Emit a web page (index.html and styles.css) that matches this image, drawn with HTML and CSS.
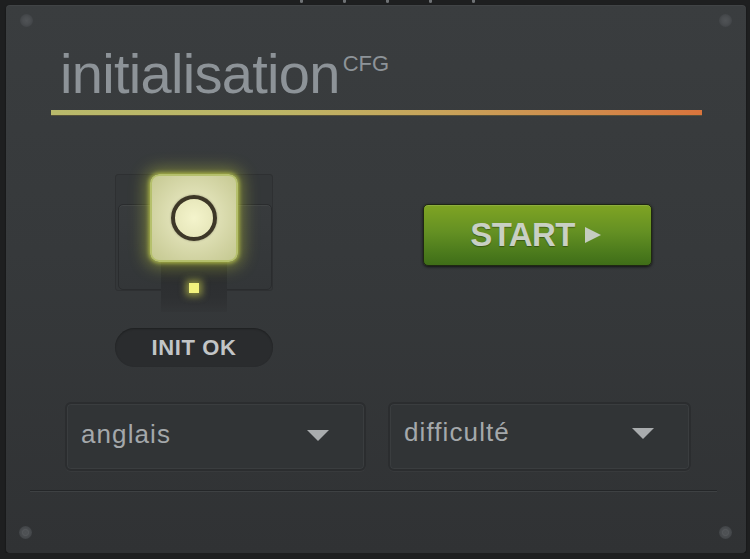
FILE: index.html
```html
<!DOCTYPE html>
<html lang="fr">
<head>
<meta charset="utf-8">
<title>initialisation CFG</title>
<link rel="stylesheet" href="styles.css">
</head>
<body>
<div class="ticks">
  <span class="tick"></span><span class="tick"></span><span class="tick"></span><span class="tick"></span><span class="tick"></span>
</div>
<main class="panel">
  <span class="screw screw-tl"></span>
  <span class="screw screw-tr"></span>
  <span class="screw screw-bl"></span>
  <span class="screw screw-br"></span>

  <h1 class="title">initialisation<sup class="title-sup">CFG</sup></h1>
  <div class="accent-bar"></div>

  <section class="controls">
    <div class="init-col">
      <div class="init-widget">
        <div class="init-frame"><div class="init-inner"></div></div>
        <button class="init-btn" type="button" aria-label="init"><span class="init-ring"></span></button>
        <div class="init-stem"><span class="led"></span></div>
      </div>
      <div class="status-pill">INIT OK</div>
    </div>
    <button class="start-btn" type="button">START<span class="play"></span></button>
  </section>

  <section class="selects">
    <div class="select"><span class="select-label">anglais</span><span class="caret"></span></div>
    <div class="select select-raised"><span class="select-label">difficulté</span><span class="caret"></span></div>
  </section>

  <div class="divider"></div>
</main>
</body>
</html>
```

FILE: styles.css
```css
html, body {
  margin: 0;
  padding: 0;
  background: #1e1f20;
  font-family: "Liberation Sans", Arial, sans-serif;
}

.ticks {
  height: 5px;
  display: flex;
  gap: 40px;
  padding-left: 300px;
}
.tick {
  width: 3px;
  height: 3px;
  background: #6f7275;
  border-radius: 0 0 2px 2px;
}

.panel {
  position: relative;
  margin: 0 4px 0 6px;
  height: 548px;
  box-sizing: border-box;
  padding-top: 41px;
  border-radius: 4px;
  background: linear-gradient(180deg, #3a3d3f 0%, #36393b 45%, #303234 100%);
  box-shadow: inset 0 1px 0 rgba(255,255,255,0.04), 0 1px 2px rgba(0,0,0,0.6);
  overflow: hidden;
}

.screw {
  position: absolute;
  width: 13px;
  height: 13px;
  border-radius: 50%;
  background: radial-gradient(circle, #505356 0%, #4a4d50 40%, #434649 65%, rgba(60,63,65,0) 100%);
}
.screw-tl { left: 14px; top: 9px; }
.screw-tr { right: 14px; top: 9px; }
.screw-bl { left: 13px; bottom: 14px; }
.screw-br { right: 14px; bottom: 14px; }
.screw-bl::after, .screw-br::after {
  content: "";
  position: absolute;
  left: 3px;
  top: 3px;
  width: 5px;
  height: 5px;
  border: 1px solid #575a5d;
  border-radius: 50%;
}

.title {
  margin: 0 0 0 54px;
  font-size: 56px;
  line-height: 56px;
  font-weight: normal;
  color: #8d9398;
  letter-spacing: -0.7px;
}
.title-sup {
  font-size: 22px;
  vertical-align: top;
  position: relative;
  top: 7px;
  margin-left: 3px;
  letter-spacing: 0;
  line-height: 1;
}

.accent-bar {
  margin: 8px 0 0 45px;
  width: 651px;
  height: 5px;
  background: linear-gradient(90deg, #b9b96b 0%, #bcb566 35%, #c8a35a 60%, #d2884a 85%, #d9743c 100%);
  box-shadow: 0 1px 0 #57513a;
}

.controls {
  display: flex;
  align-items: flex-start;
  margin-top: 59px;
  padding-left: 109px;
}

.init-col {
  width: 158px;
  display: flex;
  flex-direction: column;
  align-items: center;
}

.init-widget {
  position: relative;
  width: 158px;
  height: 138px;
  display: flex;
  flex-direction: column;
  align-items: center;
}
.init-frame {
  position: absolute;
  left: 0;
  top: 0;
  width: 158px;
  height: 117px;
  box-sizing: border-box;
  border: 1px solid #2e3032;
  border-radius: 3px;
  background: #343739;
  display: flex;
  flex-direction: column;
}
.init-inner {
  margin: 29px 0 0 2px;
  flex: 1;
  border-radius: 5px;
  border: 1px solid #2a2c2e;
  background: linear-gradient(180deg, #383b3d, #333638);
  box-shadow: inset 0 1px 0 rgba(255,255,255,0.05);
}
.init-btn {
  position: relative;
  z-index: 2;
  width: 88px;
  height: 88px;
  margin: 0;
  padding: 0;
  box-sizing: border-box;
  border: 2px solid #b5c06c;
  border-radius: 9px;
  background: radial-gradient(circle at 50% 48%, #efefca 0%, #dedfb4 40%, #cfd19f 75%, #c4c890 100%);
  box-shadow: 0 0 16px 5px rgba(200, 215, 60, 0.42), 0 0 4px 1px rgba(220, 230, 90, 0.7);
  display: flex;
  align-items: center;
  justify-content: center;
}
.init-ring {
  width: 46px;
  height: 46px;
  box-sizing: border-box;
  border-radius: 50%;
  border: 4px solid #3d3727;
  background: radial-gradient(circle, #f4f4cc 0%, #e8e8bc 70%, #dcdcae 100%);
  box-shadow: 0 0 2px rgba(60,55,40,0.5);
}
.init-stem {
  position: relative;
  z-index: 1;
  width: 66px;
  height: 50px;
  background: linear-gradient(180deg, #2b2d2f 0%, #2e3032 70%, rgba(50,52,54,0.6) 100%);
  display: flex;
  justify-content: center;
  padding-top: 21px;
  box-sizing: border-box;
}
.led {
  width: 10px;
  height: 10px;
  background: #f2f27e;
  box-shadow: 0 0 7px 3px rgba(230, 235, 80, 0.5);
}

.status-pill {
  margin-top: 16px;
  width: 158px;
  height: 39px;
  border-radius: 20px;
  background: #2a2c2e;
  color: #c2c5c7;
  font-weight: bold;
  font-size: 22px;
  letter-spacing: 0.6px;
  display: flex;
  align-items: center;
  justify-content: center;
  box-shadow: inset 0 1px 2px rgba(0,0,0,0.3);
}

.start-btn {
  margin: 30px 0 0 150px;
  width: 229px;
  height: 62px;
  padding: 0 4px 0 0;
  border: 1px solid #1f2812;
  border-radius: 5px;
  background: linear-gradient(180deg, #7fa423 0%, #649023 45%, #4b7a1c 80%, #3f6d18 100%);
  box-shadow: 0 1px 3px rgba(0,0,0,0.7), inset 0 1px 0 rgba(255,255,255,0.12);
  display: flex;
  align-items: center;
  justify-content: center;
  gap: 10px;
  font-family: "Liberation Sans", Arial, sans-serif;
  font-weight: bold;
  font-size: 33px;
  letter-spacing: -0.6px;
  color: #c9d0c4;
  text-shadow: 0 1px 1px rgba(0,0,0,0.35);
}
.play {
  width: 0;
  height: 0;
  border-top: 8px solid transparent;
  border-bottom: 8px solid transparent;
  border-left: 16px solid #c5ccc0;
}

.selects {
  display: flex;
  gap: 22px;
  margin-top: 35px;
  padding-left: 59px;
}
.select {
  width: 301px;
  height: 69px;
  box-sizing: border-box;
  border: 2px solid #2b2d2f;
  border-radius: 6px;
  background: #313436;
  box-shadow: inset 0 0 0 1px #3a3d3f, 0 1px 0 rgba(255,255,255,0.03);
  display: flex;
  align-items: center;
  justify-content: space-between;
  padding: 0 35px 4px 14px;
}
.select-raised {
  width: 303px;
  padding-bottom: 9px;
}
.select-label {
  font-size: 26px;
  letter-spacing: 1.1px;
  color: #a4a8ab;
}
.caret {
  width: 0;
  height: 0;
  border-left: 11.5px solid transparent;
  border-right: 11.5px solid transparent;
  border-top: 11px solid #a9acae;
  margin-top: 2px;
}

.divider {
  margin: 19px 0 0 24px;
  width: 687px;
  height: 1px;
  background: #242628;
  border-bottom: 1px solid #3e4143;
}
```
